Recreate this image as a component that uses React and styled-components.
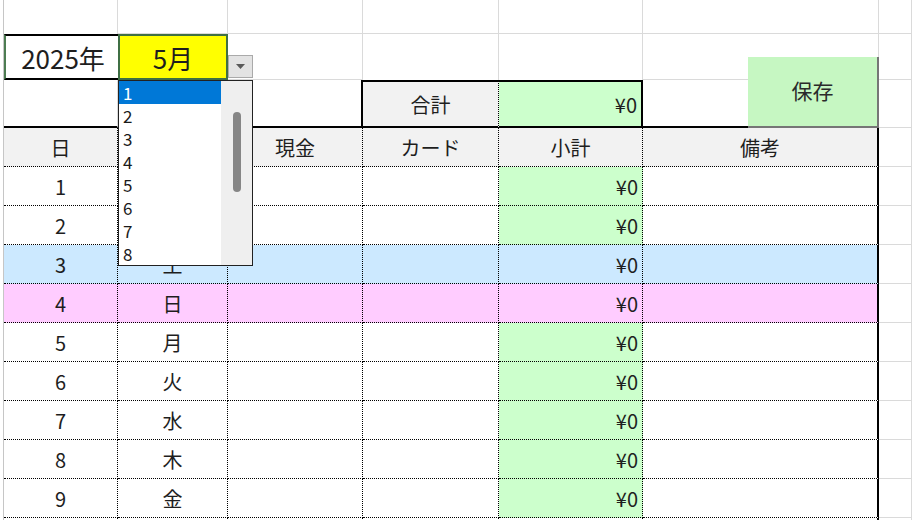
import React from "react";
import styled, { createGlobalStyle } from "styled-components";

const GlobalStyle = createGlobalStyle`
	body {
		margin: 0;
		background: #fff;
		font-family: "Noto Sans CJK JP", "Noto Sans", sans-serif;
		overflow: hidden;
	}
`;

const line = {
	grid: "1px solid #dadada",
	dot: "1px dotted #000",
	thick: "2px solid #000",
	none: "none",
};

const Sheet = styled.div`
	position: relative;
	display: grid;
	grid-template-columns: 4px 114px 110px 135px 136px 144px 236px 1fr;
	grid-template-rows: 34px 46px 48px repeat(11, 39px);
	width: 912px;
	height: 520px;
	overflow: hidden;
`;

const Cell = styled.div`
	box-sizing: border-box;
	display: flex;
	align-items: center;
	justify-content: ${props => (props.$align === "right" ? "flex-end" : "center")};
	padding: 0 ${props => (props.$align === "right" ? "4px" : "0")};
	background: ${props => props.$bg || "#fff"};
	border-top: ${props => line[props.$t || "none"]};
	border-right: ${props => line[props.$r || "grid"]};
	border-bottom: ${props => line[props.$b || "grid"]};
	font-size: 20px;
	color: #1e1e1e;
	white-space: nowrap;
`;

const Gutter = styled(Cell)`
	border-bottom: none;
	border-right: 1px solid #c6c6c6;
`;

const YearCell = styled(Cell)`
	border-left: 2px solid #4d7c52;
	font-size: 26px;
	padding-left: 2px;
`;

const MonthCell = styled(Cell)`
	background: #ffff00;
	border: 2px solid #3f6f44;
	font-size: 26px;
`;

const ArrowCell = styled(Cell)`
	justify-content: flex-start;
	align-items: flex-end;
	padding-bottom: 1px;
`;

const DropButton = styled.div`
	box-sizing: border-box;
	width: 25px;
	height: 23px;
	background: #e3e3e3;
	border: 1px solid #aaa;
	display: flex;
	align-items: center;
	justify-content: center;
`;

const SaveButton = styled.div`
	position: absolute;
	left: 748px;
	top: 57px;
	box-sizing: border-box;
	width: 131px;
	height: 71px;
	background: #c6f7c2;
	border-right: 2px solid #767676;
	border-bottom: 2px solid #767676;
	display: flex;
	align-items: center;
	justify-content: center;
	padding-bottom: 4px;
	font-size: 21px;
	color: #2a2a2a;
`;

const DropList = styled.div`
	position: absolute;
	left: 118px;
	top: 80px;
	box-sizing: border-box;
	width: 135px;
	height: 186px;
	border: 1px solid #222;
	background: #fff;
	display: flex;
`;

const Options = styled.div`
	width: 102px;
	display: flex;
	flex-direction: column;
`;

const Option = styled.div`
	height: 23px;
	line-height: 23px;
	padding-left: 4px;
	font-size: 17px;
	color: ${props => (props.$active ? "#fff" : "#1a1a1a")};
	background: ${props => (props.$active ? "#0078d7" : "#fff")};
`;

const Track = styled.div`
	flex: 1;
	background: #efefef;
	padding: 31px 0 0 12px;
`;

const Thumb = styled.div`
	width: 8px;
	height: 80px;
	border-radius: 4px;
	background: #868686;
`;

const GREEN = "#ccffcc";
const HEAD = "#f2f2f2";
const rowColors = { "土": "#cce9ff", "日": "#ffccff" };

const days = [
	[1, "木"], [2, "金"], [3, "土"], [4, "日"], [5, "月"],
	[6, "火"], [7, "水"], [8, "木"], [9, "金"],
];

const headers = ["日", "曜日", "現金", "カード", "小計", "備考"];

const App = () => (
	<>
		<GlobalStyle />
		<Sheet>
			{/* row 1 */}
			<Gutter />
			<Cell $b="none" />
			<Cell />
			<Cell />
			<Cell />
			<Cell />
			<Cell />
			<Cell />

			{/* row 2: year / month */}
			<Gutter />
			<YearCell $t="thick" $b="thick" $r="none">2025年</YearCell>
			<MonthCell>5月</MonthCell>
			<ArrowCell>
				<DropButton>
					<svg width="9" height="5" viewBox="0 0 9 5">
						<path d="M0 0h9L4.5 5z" fill="#5a5a5a" />
					</svg>
				</DropButton>
			</ArrowCell>
			<Cell $b="none" />
			<Cell $b="none" />
			<Cell />
			<Cell />

			{/* row 3: total */}
			<Gutter />
			<Cell $b="thick" />
			<Cell $b="thick" />
			<Cell $r="thick" $b="thick" />
			<Cell $bg={HEAD} $t="thick" $r="dot" $b="thick">合計</Cell>
			<Cell $bg={GREEN} $t="thick" $r="thick" $b="thick" $align="right">¥0</Cell>
			<Cell $b="thick" />
			<Cell />

			{/* header */}
			<Gutter />
			{headers.map((h, i) => (
				<Cell key={h} $bg={HEAD} $r={i === 5 ? "thick" : "dot"} $b="dot">
					{h}
				</Cell>
			))}
			<Cell />

			{days.map(([d, w]) => {
				const bg = rowColors[w];
				return (
					<React.Fragment key={d}>
						<Gutter />
						<Cell $bg={bg} $r="dot" $b="dot">{d}</Cell>
						<Cell $bg={bg} $r="dot" $b="dot">{w}</Cell>
						<Cell $bg={bg} $r="dot" $b="dot" />
						<Cell $bg={bg} $r="dot" $b="dot" />
						<Cell $bg={bg || GREEN} $r="dot" $b="dot" $align="right">¥0</Cell>
						<Cell $bg={bg} $r="thick" $b="dot" />
						<Cell />
					</React.Fragment>
				);
			})}

			{/* next row, only its top edge is in view */}
			<Gutter />
			<Cell $r="dot" $b="dot" />
			<Cell $r="dot" $b="dot" />
			<Cell $r="dot" $b="dot" />
			<Cell $r="dot" $b="dot" />
			<Cell $r="dot" $b="dot" />
			<Cell $r="thick" $b="dot" />
			<Cell />

			<SaveButton>保存</SaveButton>

			<DropList>
				<Options>
					{[1, 2, 3, 4, 5, 6, 7, 8].map(n => (
						<Option key={n} $active={n === 1}>{n}</Option>
					))}
				</Options>
				<Track>
					<Thumb />
				</Track>
			</DropList>
		</Sheet>
	</>
);

export default App;
